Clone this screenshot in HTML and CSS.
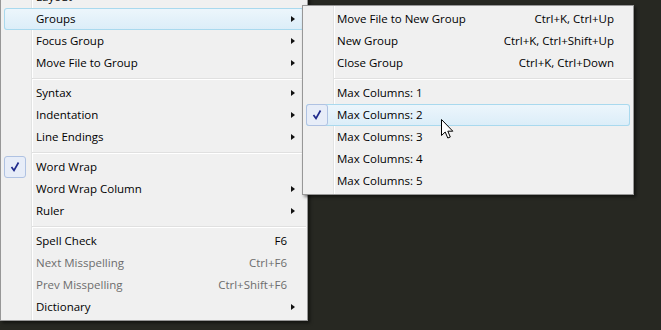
FILE: index.html
```html
<!DOCTYPE html>
<html>
<head>
    <meta charset="utf-8" />
    <title>View menu</title>
    <link rel="stylesheet" href="styles.css">
</head>
<body>
    <div class="menu menu-main">
        <div class="item"><span></span><span class="label">Layout</span><span></span><span></span></div>
        <div class="item hover"><span></span><span class="label">Groups</span><span></span><span class="arrow"></span></div>
        <div class="item"><span></span><span class="label">Focus Group</span><span></span><span class="arrow"></span></div>
        <div class="item"><span></span><span class="label">Move File to Group</span><span></span><span class="arrow"></span></div>
        <div class="sep"></div>
        <div class="item"><span></span><span class="label">Syntax</span><span></span><span class="arrow"></span></div>
        <div class="item"><span></span><span class="label">Indentation</span><span></span><span class="arrow"></span></div>
        <div class="item"><span></span><span class="label">Line Endings</span><span></span><span class="arrow"></span></div>
        <div class="sep"></div>
        <div class="item">
            <span class="check"><svg width="20" height="20" viewBox="0 0 20 20"><path d="M6.5 10 L9 13.5 L13.5 5.5" fill="none" stroke="#1f2a8c" stroke-width="1.7"/></svg></span>
            <span class="label">Word Wrap</span><span></span><span></span>
        </div>
        <div class="item"><span></span><span class="label">Word Wrap Column</span><span></span><span class="arrow"></span></div>
        <div class="item"><span></span><span class="label">Ruler</span><span></span><span class="arrow"></span></div>
        <div class="sep"></div>
        <div class="item"><span></span><span class="label">Spell Check</span><span class="key">F6</span><span></span></div>
        <div class="item disabled"><span></span><span class="label">Next Misspelling</span><span class="key">Ctrl+F6</span><span></span></div>
        <div class="item disabled"><span></span><span class="label">Prev Misspelling</span><span class="key">Ctrl+Shift+F6</span><span></span></div>
        <div class="item"><span></span><span class="label">Dictionary</span><span></span><span class="arrow"></span></div>
    </div>

    <div class="menu menu-sub">
        <div class="item"><span></span><span class="label">Move File to New Group</span><span class="key">Ctrl+K, Ctrl+Up</span><span></span></div>
        <div class="item"><span></span><span class="label">New Group</span><span class="key">Ctrl+K, Ctrl+Shift+Up</span><span></span></div>
        <div class="item"><span></span><span class="label">Close Group</span><span class="key">Ctrl+K, Ctrl+Down</span><span></span></div>
        <div class="sep"></div>
        <div class="item"><span></span><span class="label">Max Columns: 1</span><span></span><span></span></div>
        <div class="item hover">
            <span class="check"><svg width="20" height="20" viewBox="0 0 20 20"><path d="M6.5 10 L9 13.5 L13.5 5.5" fill="none" stroke="#1f2a8c" stroke-width="1.7"/></svg></span>
            <span class="label">Max Columns: 2</span><span></span><span></span>
        </div>
        <div class="item"><span></span><span class="label">Max Columns: 3</span><span></span><span></span></div>
        <div class="item"><span></span><span class="label">Max Columns: 4</span><span></span><span></span></div>
        <div class="item"><span></span><span class="label">Max Columns: 5</span><span></span><span></span></div>
    </div>

    <svg class="cursor" width="14" height="21" viewBox="0 0 14 21">
        <path d="M0.5 0.5 L0.5 16.5 L4.2 13 L6.8 19 L9.3 18 L6.8 12.2 L11.8 12.2 Z" fill="#fff" stroke="#000" stroke-width="1" stroke-linejoin="miter"/>
    </svg>
</body>
</html>
```

FILE: styles.css
```css
body {
    margin: 0;
    width: 661px;
    height: 330px;
    overflow: hidden;
    position: relative;
    background-color: #272822;
    font-family: "Open Sans", "Noto Sans", sans-serif;
    font-size: 11.5px;
    color: #000;
}
.menu {
    position: absolute;
    border: 1px solid #979797;
    padding: 2px 3px;
    background:
        linear-gradient(to right, transparent 30px, #e2e3e3 30px, #e2e3e3 31px, #fff 31px, #fff 32px, transparent 32px),
        #f0f0f0;
    box-shadow: 2px 2px 3px rgba(0, 0, 0, 0.5);
}
.menu-main {
    left: 0;
    top: -17px;
    width: 300px;
}
.menu-sub {
    left: 302px;
    top: 5px;
    width: 324px;
}
.item {
    display: grid;
    grid-template-columns: 32px 1fr auto 17px;
    align-items: center;
    height: 22px;
    line-height: 22px;
    border-radius: 3px;
    white-space: nowrap;
}
.menu-sub .item {
    grid-template-columns: 31px 1fr auto 16px;
}
.item.hover {
    background: linear-gradient(#edf6fc, #dbedf8);
    box-shadow: inset 0 0 0 1px #a9d9ee;
}
.item.disabled {
    color: #6d6d6d;
}
.key {
    padding-left: 20px;
    text-align: right;
}
.arrow {
    width: 0;
    height: 0;
    margin-left: 4px;
    border-left: 4px solid #111;
    border-top: 3.5px solid transparent;
    border-bottom: 3.5px solid transparent;
}
.check {
    display: flex;
    align-items: center;
    justify-content: center;
    width: 20px;
    height: 20px;
    border: 1px solid #afc2e2;
    border-radius: 3px;
    background-color: #e7edf8;
}
.sep {
    height: 8px;
    margin-left: 28px;
    margin-right: -2px;
    background: linear-gradient(to bottom, transparent 4px, #e0e0e0 4px, #e0e0e0 5px, #fff 5px, #fff 6px, transparent 6px);
}
.cursor {
    position: absolute;
    left: 441px;
    top: 119px;
}
```
